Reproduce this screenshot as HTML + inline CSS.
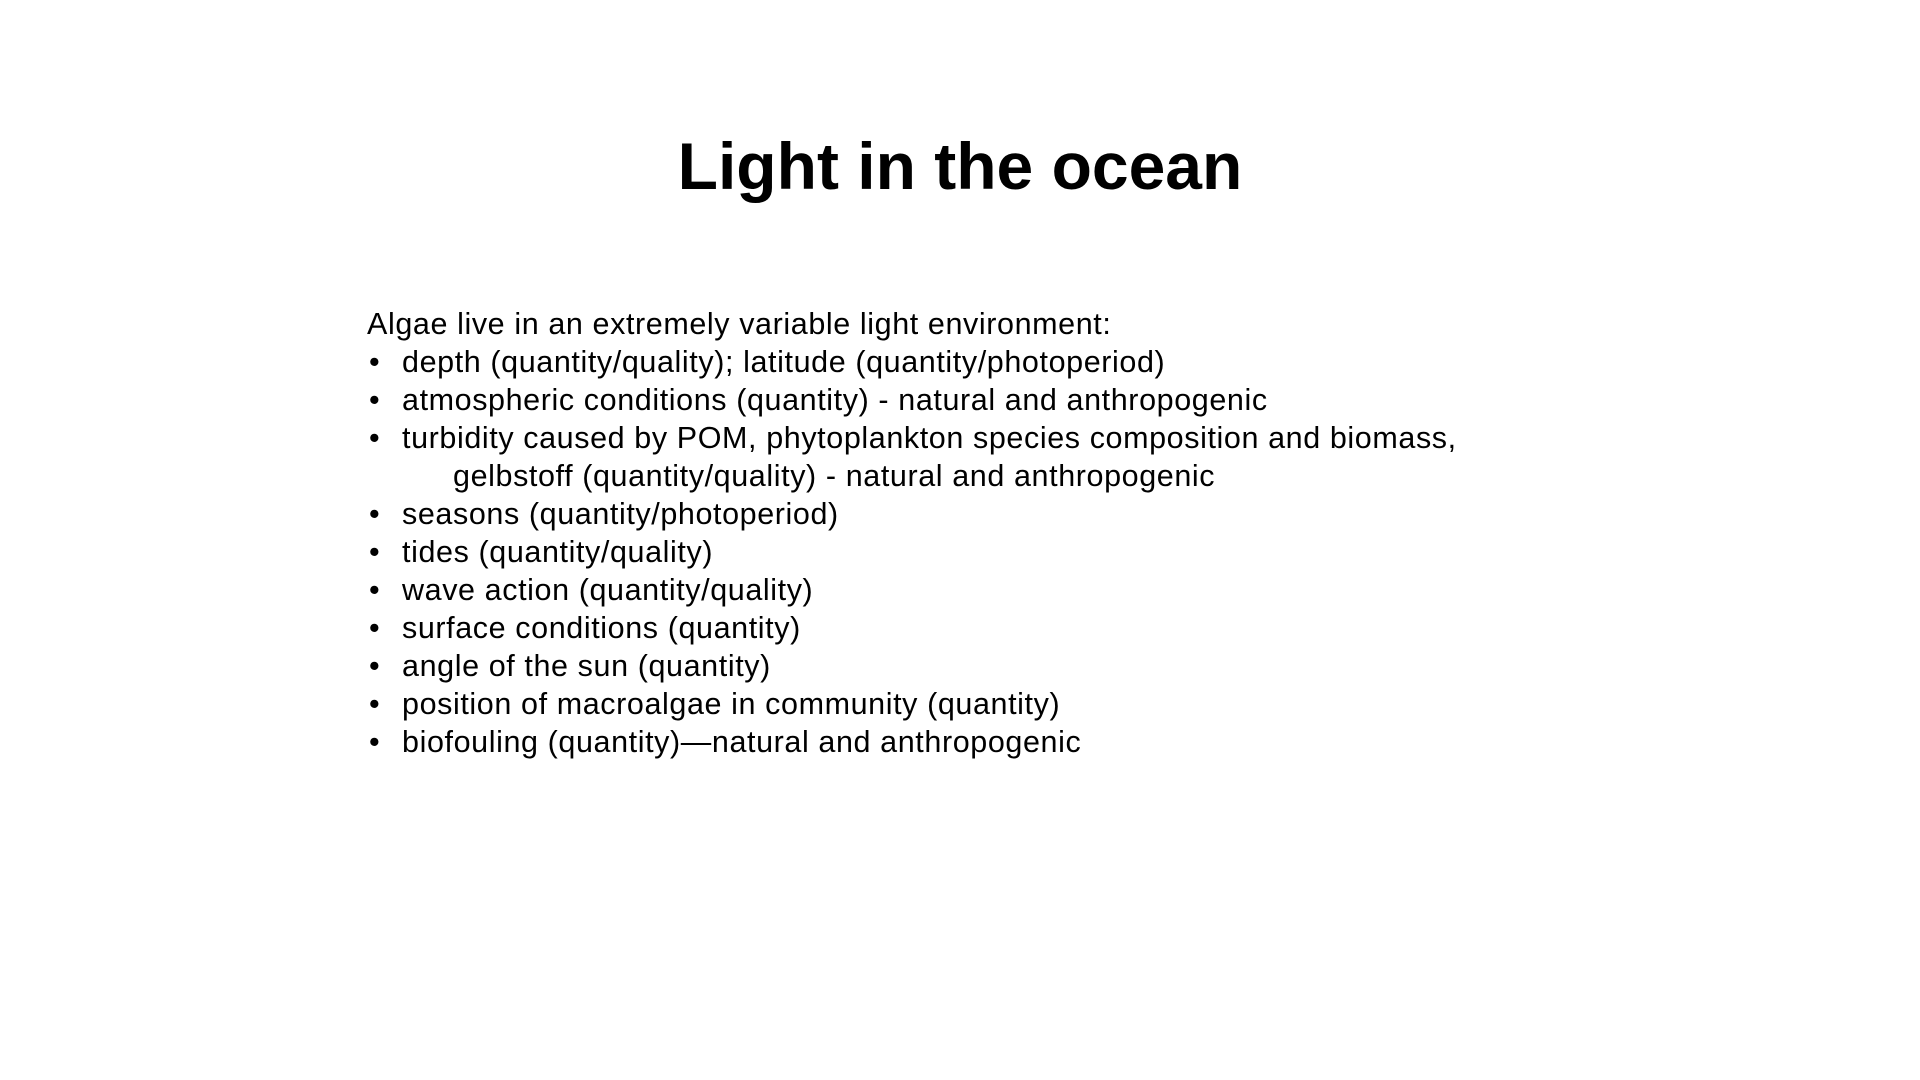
<!DOCTYPE html>
<html><head><meta charset="utf-8"><style>
html,body{margin:0;padding:0;background:#fff;width:1920px;height:1080px;overflow:hidden;font-family:"Liberation Sans",Arial,sans-serif;color:#000}
h1{position:absolute;left:0;width:1920px;top:131px;margin:0;text-align:center;font-size:66px;line-height:70px;font-weight:bold}
.b{position:absolute;left:367px;top:305px;font-size:30.5px;line-height:38px;white-space:nowrap;letter-spacing:0.6px}
.b div{position:relative}
.li{padding-left:35px}
.li:before{content:"•";position:absolute;left:2px}
.ind{padding-left:86px}
</style></head><body>
<h1>Light in the ocean</h1>
<div class="b">
<div>Algae live in an extremely variable light environment:</div>
<div class="li">depth (quantity/quality); latitude (quantity/photoperiod)</div>
<div class="li">atmospheric conditions (quantity) - natural and anthropogenic</div>
<div class="li">turbidity caused by POM, phytoplankton species composition and biomass,</div>
<div class="ind">gelbstoff (quantity/quality) - natural and anthropogenic</div>
<div class="li">seasons (quantity/photoperiod)</div>
<div class="li">tides (quantity/quality)</div>
<div class="li">wave action (quantity/quality)</div>
<div class="li">surface conditions (quantity)</div>
<div class="li">angle of the sun (quantity)</div>
<div class="li">position of macroalgae in community (quantity)</div>
<div class="li">biofouling (quantity)—natural and anthropogenic</div>
</div>
</body></html>
